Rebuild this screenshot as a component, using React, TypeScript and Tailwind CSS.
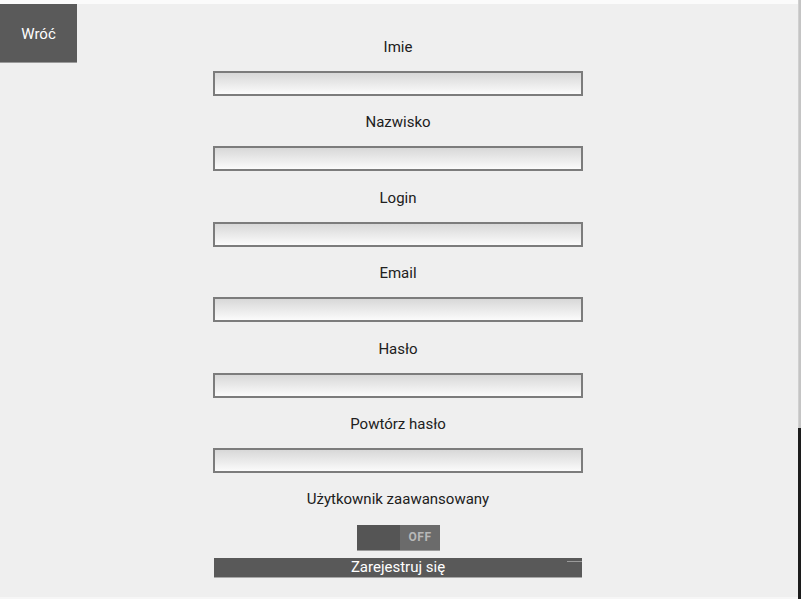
import React from "react";

const fields = ["Imie", "Nazwisko", "Login", "Email", "Hasło", "Powtórz hasło"];

function Field({ label }: { label: string }) {
  return (
    <div className="mb-[16.4px] flex shrink-0 flex-col last:mb-0">
      <div className="h-5 text-center text-[15px] leading-5 text-[#202020]">{label}</div>
      <div className="mt-[14px] h-[25px] w-[370px] shrink-0 border-2 border-[#7c7c7c] bg-gradient-to-b from-[#d8d8d8] to-[#fbfbfb]" />
    </div>
  );
}

export default function App() {
  return (
    <div className="flex h-[599px] w-[801px] bg-[#efefef] font-['Roboto',sans-serif]">
      <div className="flex flex-1 flex-col">
        {/* top strip */}
        <div className="h-1 shrink-0 bg-[#fbfbfb]" />

        <div className="grid flex-1 grid-cols-[213px_370px_1fr]">
          {/* Back button */}
          <div className="self-start">
            <button className="flex h-[58px] w-[77px] items-center justify-center pt-[2px] bg-[#5a5a5a] text-[15px] text-white shadow-[0_1px_0_#9a9a9a]">
              Wróć
            </button>
          </div>

          {/* Form */}
          <div className="flex flex-col pt-[33px]">
            <div className="flex flex-col">
              {fields.map((f) => (
                <Field key={f} label={f} />
              ))}
            </div>

            <div className="mt-4 h-5 text-center text-[15px] leading-5 text-[#202020]">
              Użytkownik zaawansowany
            </div>

            {/* Toggle */}
            <div className="mt-4 flex justify-center pl-[1px]">
              <div className="flex h-[25px] w-[83px] shadow-[0_1px_0_#9c9c9c]">
                <div className="w-[43px] bg-[#555555]" />
                <div className="flex flex-1 items-center justify-center bg-[#6b6b6b] text-[12px] font-bold tracking-wider text-[#b8b8b8]">
                  OFF
                </div>
              </div>
            </div>

            {/* Register */}
            <div className="relative mt-2 ml-[1px] flex h-[19px] w-[368px] shrink-0 items-center justify-center bg-[#595959] pt-[1px] text-[15px] leading-none text-white shadow-[0_1px_0_#a8a8a8]">
              Zarejestruj się
              <div className="absolute right-0 top-[3px] h-[1px] w-[15px] bg-[#9a9a9a]" />
            </div>
          </div>
          <div />
        </div>
        <div className="h-[2px] shrink-0 bg-[#f6f6f6]" />
      </div>

      {/* right edge strip */}
      <div className="flex w-[3px] flex-col">
        <div className="h-[428px] border-l border-[#d0d0d0] bg-[#c4c4c4]" />
        <div className="flex-1 bg-[#1c1c1c]" />
      </div>
    </div>
  );
}
